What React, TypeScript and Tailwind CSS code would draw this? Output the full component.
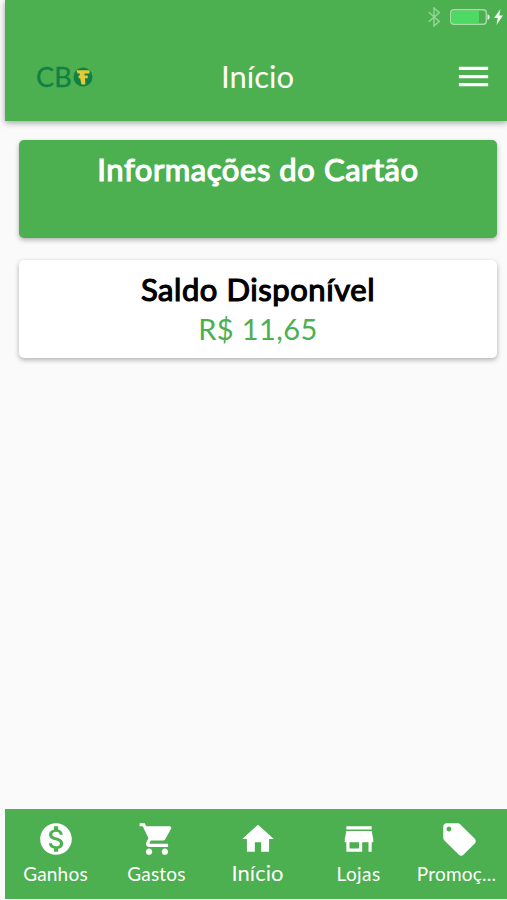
import { ReactNode } from 'react';
import { MdHome, MdLocalOffer, MdMenu, MdMonetizationOn, MdShoppingCart, MdStore } from 'react-icons/md';

interface TabProps {
  icon: ReactNode;
  label: string;
  labelClass: string;
}

function Logo() {
  return (
    <div className="flex w-[60px] items-center text-[#108044]">
      <span className="font-['Lato'] text-[27px] leading-[30px] tracking-[0.3px] [-webkit-text-stroke:0.3px]">CB</span>
      <svg viewBox="0 0 20 20" className="ml-px h-[20px] w-[20px] shrink-0">
        <circle cx="10" cy="10" r="9.5" fill="#108044" />
        <path
          d="M3.5 3.2h13v3.2h-4.9v2.2h3.2v2.6H12l.4 6.3H8.4L7.2 11.2H5.6V8.6h1.2V6.4H4.5z"
          fill="#e6c935"
        />
      </svg>
    </div>
  );
}

function StatusBar() {
  return (
    <div className="flex h-[34px] items-center justify-end pr-[4px]">
      {/* bluetooth */}
      <svg viewBox="0 0 12 20" className="mr-[10px] h-[20px] w-[12px]" fill="none" stroke="#94d497" strokeWidth="1.5">
        <path d="M.8 5.2l10.4 9.2L6 19V1l5.2 4.6L.8 14.8" />
      </svg>
      {/* battery */}
      <svg viewBox="0 0 40 16" className="mr-[4px] h-[16px] w-[40px]">
        <rect x=".7" y=".7" width="35.6" height="14.6" rx="3" fill="none" stroke="#a8dca9" strokeWidth="1.4" />
        <rect x="2" y="2" width="27" height="12" rx="1" fill="#4cd964" />
        <path d="M37.5 5.2c2.8.6 2.8 5 0 5.6z" fill="#e4f5e4" />
      </svg>
      <svg viewBox="0 0 9 16" className="h-[16px] w-[9px]" fill="#f2fbf2">
        <path d="M6.5 0L0 9h3.7L2.5 16 9 6.6H5.3z" />
      </svg>
    </div>
  );
}

function Tab({ icon, label, labelClass }: TabProps) {
  return (
    <div className="flex w-[101px] shrink-0 flex-col items-center pt-[11px] text-white">
      <div className="flex h-[38px] items-center">{icon}</div>
      <span className={labelClass}>{label}</span>
    </div>
  );
}

const tabLabel = 'mt-[4px] text-[19px] leading-[24px] whitespace-nowrap tracking-[0.2px]';
const cardTitle = 'text-[31px] leading-[40px] font-normal tracking-[0.55px] [-webkit-text-stroke:1.2px]';

export default function App() {
  return (
    <div className="h-[900px] w-[507px] overflow-hidden bg-[#fafafa] pl-[5px] font-['Lato',sans-serif]">
      <div className="flex h-[899px] flex-col">
        <header className="h-[121px] shrink-0 bg-[#4caf50] shadow-[0_2px_6px_rgba(0,0,0,0.35)]">
          <StatusBar />
          <div className="grid h-[85px] grid-cols-[1fr_auto_1fr] items-center pr-[14px] pl-[31px]">
            <Logo />
            <h1 className="-ml-[14px] text-[31px] text-white">Início</h1>
            <MdMenu size={39} className="justify-self-end text-white" />
          </div>
        </header>

        <main className="flex flex-1 flex-col gap-[22px] pt-[19px] pr-[10px] pl-[14px] text-center">
          <section className="h-[98px] rounded-[5px] bg-[#4caf50] pt-[9px] shadow-[0_2px_5px_rgba(0,0,0,0.3)]">
            <h2 className={`${cardTitle} text-white`}>Informações do Cartão</h2>
          </section>
          <section className="h-[98px] rounded-[5px] bg-white pt-[9px] shadow-[0_2px_5px_rgba(0,0,0,0.3)]">
            <h2 className={`${cardTitle} text-black`}>Saldo Disponível</h2>
            <p className="text-[29px] leading-[40px] tracking-[0.4px] text-[#4caf50]">R$ 11,65</p>
          </section>
        </main>

        <nav className="flex h-[90px] shrink-0 bg-[#4caf50]">
          <Tab icon={<MdMonetizationOn size={38} />} label="Ganhos" labelClass={tabLabel} />
          <Tab icon={<MdShoppingCart size={38} />} label="Gastos" labelClass={tabLabel} />
          <Tab
            icon={<MdHome size={38} />}
            label="Início"
            labelClass="mt-[1px] text-[22px] leading-[27px] whitespace-nowrap"
          />
          <Tab icon={<MdStore size={38} />} label="Lojas" labelClass={`${tabLabel} tracking-[0.4px]`} />
          <Tab icon={<MdLocalOffer size={39} />} label="Promoç..." labelClass={`${tabLabel} -ml-[6px]`} />
        </nav>
      </div>
    </div>
  );
}
